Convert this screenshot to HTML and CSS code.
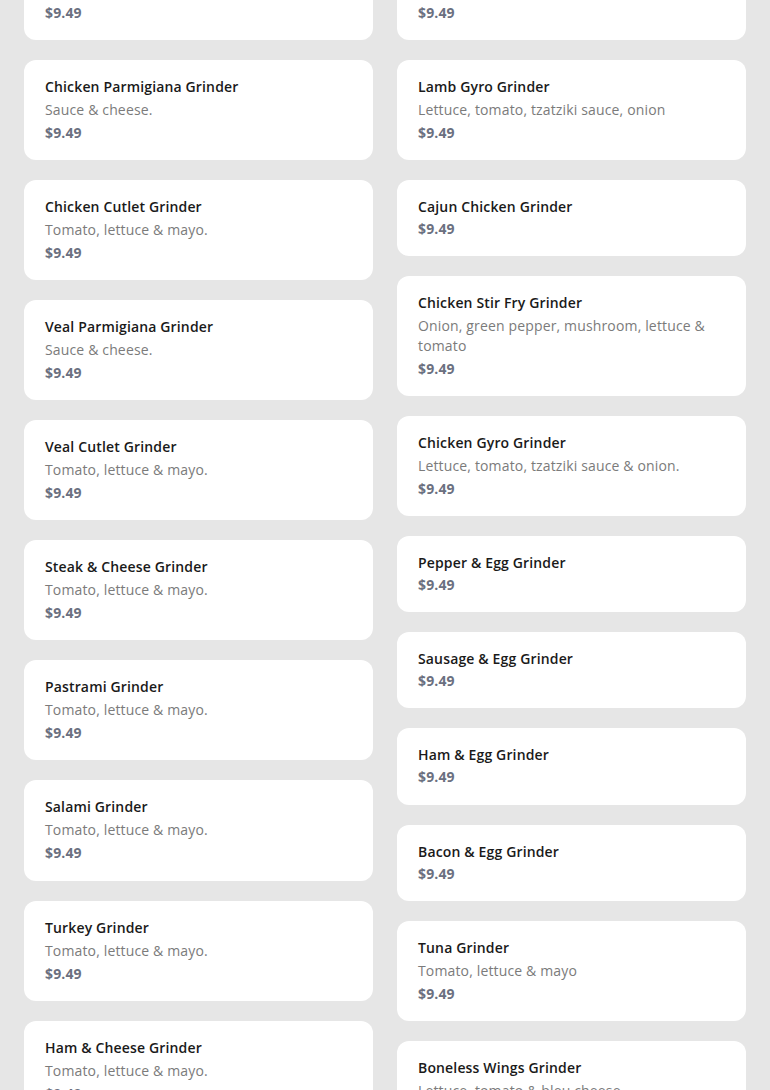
FILE: index.html
```html
<!DOCTYPE html>
<html>
<head>
<meta charset="utf-8">
<link rel="stylesheet" href="styles.css">
</head>
<body>
<div class="menu">
  <div class="col">
    <div class="card"><div class="name">Meatball Grinder</div><div class="desc">Sauce &amp; cheese.</div><div class="price">$9.49</div></div>
    <div class="card"><div class="name">Chicken Parmigiana Grinder</div><div class="desc">Sauce &amp; cheese.</div><div class="price">$9.49</div></div>
    <div class="card"><div class="name">Chicken Cutlet Grinder</div><div class="desc">Tomato, lettuce &amp; mayo.</div><div class="price">$9.49</div></div>
    <div class="card"><div class="name">Veal Parmigiana Grinder</div><div class="desc">Sauce &amp; cheese.</div><div class="price">$9.49</div></div>
    <div class="card"><div class="name">Veal Cutlet Grinder</div><div class="desc">Tomato, lettuce &amp; mayo.</div><div class="price">$9.49</div></div>
    <div class="card"><div class="name">Steak &amp; Cheese Grinder</div><div class="desc">Tomato, lettuce &amp; mayo.</div><div class="price">$9.49</div></div>
    <div class="card"><div class="name">Pastrami Grinder</div><div class="desc">Tomato, lettuce &amp; mayo.</div><div class="price">$9.49</div></div>
    <div class="card tall"><div class="name">Salami Grinder</div><div class="desc">Tomato, lettuce &amp; mayo.</div><div class="price">$9.49</div></div>
    <div class="card"><div class="name">Turkey Grinder</div><div class="desc">Tomato, lettuce &amp; mayo.</div><div class="price">$9.49</div></div>
    <div class="card"><div class="name">Ham &amp; Cheese Grinder</div><div class="desc">Tomato, lettuce &amp; mayo.</div><div class="price">$9.49</div></div>
  </div>
  <div class="col">
    <div class="card"><div class="name">Gyro Grinder</div><div class="desc">Lettuce, tomato, tzatziki sauce, onion</div><div class="price">$9.49</div></div>
    <div class="card"><div class="name">Lamb Gyro Grinder</div><div class="desc">Lettuce, tomato, tzatziki sauce, onion</div><div class="price">$9.49</div></div>
    <div class="card"><div class="name">Cajun Chicken Grinder</div><div class="price">$9.49</div></div>
    <div class="card"><div class="name">Chicken Stir Fry Grinder</div><div class="desc">Onion, green pepper, mushroom, lettuce &amp; tomato</div><div class="price">$9.49</div></div>
    <div class="card"><div class="name">Chicken Gyro Grinder</div><div class="desc">Lettuce, tomato, tzatziki sauce &amp; onion.</div><div class="price">$9.49</div></div>
    <div class="card"><div class="name">Pepper &amp; Egg Grinder</div><div class="price">$9.49</div></div>
    <div class="card"><div class="name">Sausage &amp; Egg Grinder</div><div class="price">$9.49</div></div>
    <div class="card tall"><div class="name">Ham &amp; Egg Grinder</div><div class="price">$9.49</div></div>
    <div class="card"><div class="name">Bacon &amp; Egg Grinder</div><div class="price">$9.49</div></div>
    <div class="card"><div class="name">Tuna Grinder</div><div class="desc">Tomato, lettuce &amp; mayo</div><div class="price">$9.49</div></div>
    <div class="card"><div class="name">Boneless Wings Grinder</div><div class="desc">Lettuce, tomato &amp; bleu cheese.</div><div class="price">$9.49</div></div>
  </div>
</div>
</body>
</html>
```
FILE: styles.css
```css
html, body {
  margin: 0;
  padding: 0;
  background: #e6e6e6;
  overflow: hidden;
  height: 1090px;
}
body {
  font-family: "Open Sans", "Liberation Sans", sans-serif;
  font-size: 14px;
  letter-spacing: 0.15px;
}
.menu {
  display: grid;
  grid-template-columns: 1fr 1fr;
  column-gap: 24px;
  margin: -60px 24px 0;
  align-items: start;
}
.col {
  display: flex;
  flex-direction: column;
  gap: 20px;
}
.card {
  background: #ffffff;
  border-radius: 12px;
  padding: 17px 20px 15px 21px;
}
.card.tall {
  padding-bottom: 16px;
}
.name {
  font-weight: 600;
  color: #1a1a1a;
  line-height: 20px;
}
.desc {
  color: #7b7b7b;
  line-height: 20px;
  margin: 3px 0 1px;
}
.price {
  font-weight: 700;
  color: #6b7080;
  line-height: 24px;
}
```
